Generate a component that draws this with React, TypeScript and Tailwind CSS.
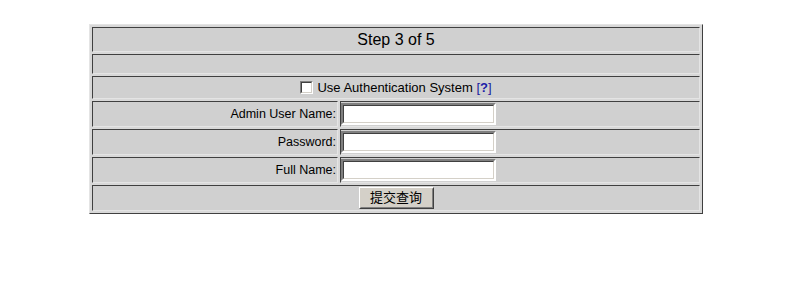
import React from 'react';

const cell =
  'border border-t-[#404040] border-l-[#404040] border-b-[#e4e4e4] border-r-[#e4e4e4] bg-[#d0d0d0]';

function TextBox() {
  return (
    <div className="w-[155px] h-[22px] border-2 border-t-[#808080] border-l-[#808080] border-b-white border-r-white">
      <input
        type="text"
        className="block w-full h-full bg-white outline-none border border-t-[#404040] border-l-[#404040] border-b-[#d4d0c8] border-r-[#d4d0c8] px-1 text-[13px]"
      />
    </div>
  );
}

function FieldRow({ label }: { label: string }) {
  return (
    <div className="flex gap-[2px] h-[26px]">
      <div className={`${cell} w-[246px] flex items-center justify-end pr-px text-[12.5px]`}>{label}</div>
      <div className={`${cell} flex-1 flex items-center pl-0`}>
        <TextBox />
      </div>
    </div>
  );
}

export default function App() {
  return (
    <div className="min-h-screen bg-white pt-[24px] text-[12px] text-black" style={{ fontFamily: '"Liberation Sans", Arial, "Noto Sans CJK SC", sans-serif' }}>
      <div className="ml-[89px] w-[614px] border border-t-[#e4e4e4] border-l-[#e4e4e4] border-b-[#404040] border-r-[#404040] bg-[#d8d8d8] p-[2px] flex flex-col gap-[2px]">
        {/* Header */}
        <div className={`${cell} h-[25px] flex items-center justify-center text-[16px]`}>Step 3 of 5</div>
        <div className={`${cell} h-[20px]`}></div>

        <div className={`${cell} h-[23px] flex items-center justify-center text-[13px]`}>
          <span className="inline-block w-[13px] h-[13px] mr-[4px] border border-t-[#808080] border-l-[#808080] border-b-white border-r-white">
            <span className="block w-full h-full bg-white border border-t-[#404040] border-l-[#404040] border-b-[#d4d0c8] border-r-[#d4d0c8]"></span>
          </span>
          <span>
            Use Authentication System <span className="text-[#1c1c9c]">[<b className="text-[#1c1ca8]">?</b>]</span>
          </span>
        </div>

        <FieldRow label="Admin User Name:" />
        <FieldRow label="Password:" />
        <FieldRow label="Full Name:" />

        <div className={`${cell} h-[26px] flex items-center justify-center`}>
          <button className="w-[75px] h-[22px] bg-[#d4d0c8] border border-t-white border-l-white border-b-[#404040] border-r-[#404040] text-[13px] leading-none">
            <span className="block w-full h-full border border-transparent border-b-[#808080] border-r-[#808080] pt-px" style={{ fontFamily: '"Noto Sans CJK SC", sans-serif' }}>
              提交查询
            </span>
          </button>
        </div>
      </div>
    </div>
  );
}
